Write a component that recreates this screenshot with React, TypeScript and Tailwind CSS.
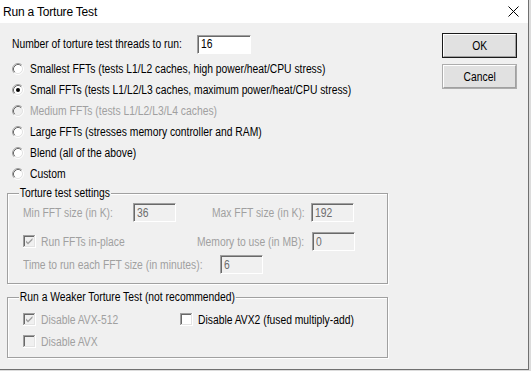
import React from "react";

const font = { fontFamily: '"Liberation Sans", Arial, sans-serif' };

// the dialog font is condensed, squeeze Liberation Sans to match
const T: React.FC<{ children: React.ReactNode; className?: string }> = ({ children, className = "" }) => (
  <span className={`inline-block whitespace-nowrap origin-left scale-x-[0.86] ${className}`}>{children}</span>
);

type BoxProps = { checked?: boolean; disabled?: boolean };

const Radio: React.FC<BoxProps> = ({ checked, disabled }) => (
  <svg width="12" height="12" viewBox="0 0 12 12" className="shrink-0">
    <circle cx="6" cy="6" r="4.5" fill={disabled ? "#f0f0f0" : "#ffffff"} />
    <path d="M2.11 9.89 A5.5 5.5 0 0 1 9.89 2.11" fill="none" stroke="#a0a0a0" strokeWidth="1" />
    <path d="M9.89 2.11 A5.5 5.5 0 0 1 2.11 9.89" fill="none" stroke="#ffffff" strokeWidth="1" />
    <path d="M2.82 9.18 A4.5 4.5 0 0 1 9.18 2.82" fill="none" stroke="#696969" strokeWidth="1" />
    <path d="M9.18 2.82 A4.5 4.5 0 0 1 2.82 9.18" fill="none" stroke="#e3e3e3" strokeWidth="1" />
    {checked && <circle cx="6" cy="6" r="2" fill={disabled ? "#a0a0a0" : "#000000"} />}
  </svg>
);

const Check: React.FC<BoxProps> = ({ checked, disabled }) => (
  <svg width="13" height="13" viewBox="0 0 13 13" className="shrink-0">
    <rect x="0" y="0" width="13" height="13" fill="#ffffff" />
    <rect x="0" y="0" width="12" height="12" fill="#a0a0a0" />
    <rect x="1" y="1" width="11" height="11" fill="#e3e3e3" />
    <rect x="1" y="1" width="10" height="10" fill="#696969" />
    <rect x="2" y="2" width="9" height="9" fill={disabled ? "#f0f0f0" : "#ffffff"} />
    {checked && (
      <path d="M3 5.5 L5 7.5 L9.5 3 L9.5 5 L5 9.5 L3 7.5 Z" fill={disabled ? "#a0a0a0" : "#000000"} />
    )}
  </svg>
);

const Field: React.FC<{ value: string; w: string; disabled?: boolean }> = ({ value, w, disabled }) => (
  <div
    className={`${w} h-[19px] shrink-0 border border-t-[#a0a0a0] border-l-[#a0a0a0] border-r-white border-b-white shadow-[inset_1px_1px_0_#696969] flex items-center pl-[3px] ${
      disabled ? "bg-[#f0f0f0] text-[#6d6d6d]" : "bg-white text-black"
    }`}
  >
    <T>{value}</T>
  </div>
);

const RadioRow: React.FC<{ label: string; checked?: boolean; disabled?: boolean }> = ({ label, checked, disabled }) => (
  <div className="h-[21px] flex items-center gap-[6px] pl-[5px]">
    <Radio checked={checked} disabled={disabled} />
    <T className={disabled ? "text-[#a0a0a0]" : "text-black"}>{label}</T>
  </div>
);

const Group: React.FC<{ title: string; h: string; children: React.ReactNode }> = ({ title, h, children }) => (
  <div className={`relative w-[381px] ${h} border border-[#a0a0a0] shadow-[1px_1px_0_#ffffff,inset_1px_1px_0_#ffffff]`}>
    <span className="absolute left-[11px] top-[-8px] leading-[14px]">
      <T className="bg-[#f0f0f0] px-[1px]">{title}</T>
    </span>
    {children}
  </div>
);

const Button: React.FC<{ label: string; primary?: boolean }> = ({ label, primary }) => (
  <div
    className={`w-[75px] h-[25px] bg-[#e1e1e1] ${primary ? "border border-[#1a1a1a]" : "border border-[#adadad]"}`}
  >
    <div className="w-full h-full flex items-center justify-center border border-t-white border-l-white border-r-[#a0a0a0] border-b-[#a0a0a0]">
      <span className="inline-block scale-x-[0.86]">{label}</span>
    </div>
  </div>
);

export default function App() {
  return (
    <div className="w-[531px] h-[371px] bg-[#dcdcdc] overflow-hidden text-[12px] text-black" style={font}>
      <div className="w-[529px] h-[370px] bg-[#f0f0f0] border-r border-b border-[#707070] flex flex-col">
        <div className="h-[23px] bg-white flex items-center justify-between pl-[3px] pr-[9px] shrink-0">
          <span className="text-[12px] tracking-[-0.2px]">Run a Torture Test</span>
          <svg width="11" height="11" viewBox="0 0 11 11">
            <path d="M0.5 0.5 L10.5 10.5 M10.5 0.5 L0.5 10.5" stroke="#000" strokeWidth="1" />
          </svg>
        </div>

        <div className="flex">
          <div className="w-[435px] pl-[7px] pt-[11px]">
            <div className="h-[20px] flex items-center pl-[5px]">
              <div className="w-[185px]">
                <T>Number of torture test threads to run:</T>
              </div>
              <Field value="16" w="w-[54px]" />
            </div>
            <div className="mt-[4px]">
              <RadioRow label="Smallest FFTs (tests L1/L2 caches, high power/heat/CPU stress)" />
              <RadioRow label="Small FFTs (tests L1/L2/L3 caches, maximum power/heat/CPU stress)" checked />
              <RadioRow label="Medium FFTs (tests L1/L2/L3/L4 caches)" disabled />
              <RadioRow label="Large FFTs (stresses memory controller and RAM)" />
              <RadioRow label="Blend (all of the above)" />
              <RadioRow label="Custom" />
            </div>

            <div className="mt-[9px]">
              <Group title="Torture test settings" h="h-[91px]">
                <div className="pt-[9px] pl-[15px] text-[#a0a0a0]">
                  <div className="flex items-center h-[19px]">
                    <div className="w-[110px]">
                      <T>Min FFT size (in K):</T>
                    </div>
                    <Field value="36" w="w-[43px]" disabled />
                    <div className="w-[99px] ml-[36px]">
                      <T>Max FFT size (in K):</T>
                    </div>
                    <Field value="192" w="w-[43px]" disabled />
                  </div>
                  <div className="flex items-center h-[19px] mt-[10px]">
                    <div className="w-[174px] flex items-center gap-[5px]">
                      <Check checked disabled />
                      <T>Run FFTs in-place</T>
                    </div>
                    <div className="w-[115px]">
                      <T>Memory to use (in MB):</T>
                    </div>
                    <Field value="0" w="w-[43px]" disabled />
                  </div>
                  <div className="flex items-center h-[19px] mt-[4px]">
                    <div className="w-[197px]">
                      <T>Time to run each FFT size (in minutes):</T>
                    </div>
                    <Field value="6" w="w-[43px]" disabled />
                  </div>
                </div>
              </Group>
            </div>

            <div className="mt-[13px]">
              <Group title="Run a Weaker Torture Test (not recommended)" h="h-[61px]">
                <div className="pt-[14px] pl-[15px]">
                  <div className="flex items-center h-[15px]">
                    <div className="w-[157px] flex items-center gap-[5px] text-[#a0a0a0]">
                      <Check checked disabled />
                      <T>Disable AVX-512</T>
                    </div>
                    <div className="flex items-center gap-[5px]">
                      <Check />
                      <T>Disable AVX2 (fused multiply-add)</T>
                    </div>
                  </div>
                  <div className="flex items-center h-[15px] mt-[7px] gap-[5px] text-[#a0a0a0]">
                    <Check disabled />
                    <T>Disable AVX</T>
                  </div>
                </div>
              </Group>
            </div>
          </div>

          <div className="pt-[10px] pl-[7px] flex flex-col gap-[6px]">
            <Button label="OK" primary />
            <Button label="Cancel" />
          </div>
        </div>
      </div>
    </div>
  );
}
